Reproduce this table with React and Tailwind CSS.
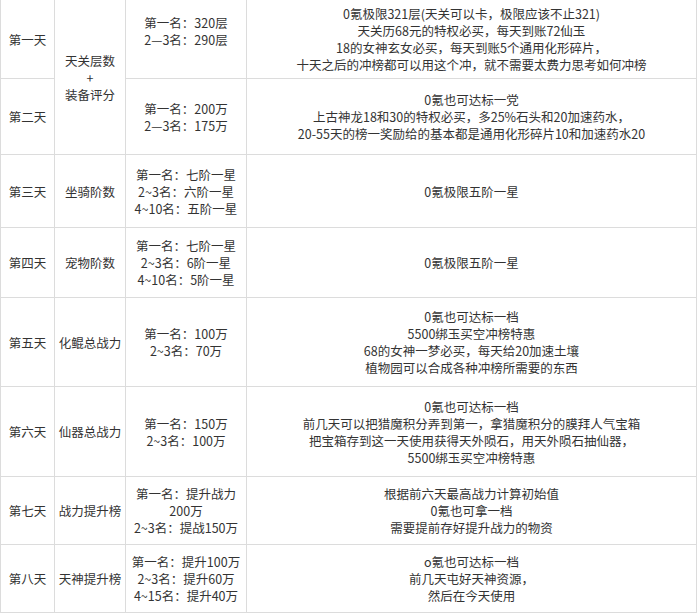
import React from "react";

const rows = [
  {
    day: "第一天",
    h: "h-[79px]",
    rank: ["第一名：320层", "2—3名：290层", "\u00a0"],
    note: [
      "0氪极限321层(天关可以卡，极限应该不止321)",
      "天关历68元的特权必买，每天到账72仙玉",
      "18的女神玄女必买，每天到账5个通用化形碎片，",
      "十天之后的冲榜都可以用这个冲，就不需要太费力思考如何冲榜",
    ],
  },
  {
    day: "第二天",
    h: "h-[76px]",
    rank: ["第一名：200万", "2—3名：175万"],
    note: [
      "0氪也可达标一党",
      "上古神龙18和30的特权必买，多25%石头和20加速药水，",
      "20-55天的榜一奖励给的基本都是通用化形碎片10和加速药水20",
    ],
  },
  {
    day: "第三天",
    h: "h-[73px]",
    type: "坐骑阶数",
    rank: ["第一名：七阶一星", "2~3名：六阶一星", "4~10名：五阶一星"],
    note: ["0氪极限五阶一星"],
  },
  {
    day: "第四天",
    h: "h-[70px]",
    type: "宠物阶数",
    rank: ["第一名：七阶一星", "2~3名：6阶一星", "4~10名：5阶一星"],
    note: ["0氪极限五阶一星"],
  },
  {
    day: "第五天",
    h: "h-[89px]",
    type: "化鲲总战力",
    rank: ["第一名：100万", "2~3名：70万"],
    note: [
      "0氪也可达标一档",
      "5500绑玉买空冲榜特惠",
      "68的女神一梦必买，每天给20加速土壤",
      "植物园可以合成各种冲榜所需要的东西",
    ],
  },
  {
    day: "第六天",
    h: "h-[90px]",
    type: "仙器总战力",
    rank: ["第一名：150万", "2~3名：100万"],
    note: [
      "0氪也可达标一档",
      "前几天可以把猎魔积分弄到第一，拿猎魔积分的膜拜人气宝箱",
      "把宝箱存到这一天使用获得天外陨石，用天外陨石抽仙器，",
      "5500绑玉买空冲榜特惠",
    ],
  },
  {
    day: "第七天",
    h: "h-[68px]",
    type: "战力提升榜",
    rank: ["第一名：提升战力", "200万", "2~3名：提战150万"],
    note: ["根据前六天最高战力计算初始值", "0氪也可拿一档", "需要提前存好提升战力的物资"],
  },
  {
    day: "第八天",
    h: "h-[68px]",
    type: "天神提升榜",
    rank: ["第一名：提升100万", "2~3名：提升60万", "4~15名：提升40万"],
    note: ["o氪也可达标一档", "前几天屯好天神资源，", "然后在今天使用"],
  },
];

function Lines({ items }) {
  return (
    <div className="flex flex-col items-center">
      {items.map((t, i) => (
        <div key={i} className="whitespace-nowrap">
          {t}
        </div>
      ))}
    </div>
  );
}

const cell =
  "flex items-center justify-center text-center border-r border-b border-[#dcdcdc]";

export default function App() {
  return (
    <div
      className="w-[697px] h-[615px] bg-white text-[#333] text-[12.5px] leading-[17px] overflow-hidden"
      style={{ fontFamily: '"Noto Sans CJK SC", "Noto Sans", sans-serif' }}
    >
      <div className="grid grid-cols-[55px_71px_121px_450px] grid-rows-[79px_76px_73px_70px_89px_90px_68px_68px]">
        {rows.map((r, i) => (
          <React.Fragment key={r.day}>
            <div className={`${cell} border-l`}>{r.day}</div>
            {i === 0 && (
              <div className={`${cell} row-span-2`}>
                <Lines items={["天关层数", "+", "装备评分"]} />
              </div>
            )}
            {i > 1 && (
              <div className={cell}>
                <span className="whitespace-nowrap">{r.type}</span>
              </div>
            )}
            <div className={cell}>
              <Lines items={r.rank} />
            </div>
            <div className={cell}>
              <Lines items={r.note} />
            </div>
          </React.Fragment>
        ))}
      </div>
    </div>
  );
}
